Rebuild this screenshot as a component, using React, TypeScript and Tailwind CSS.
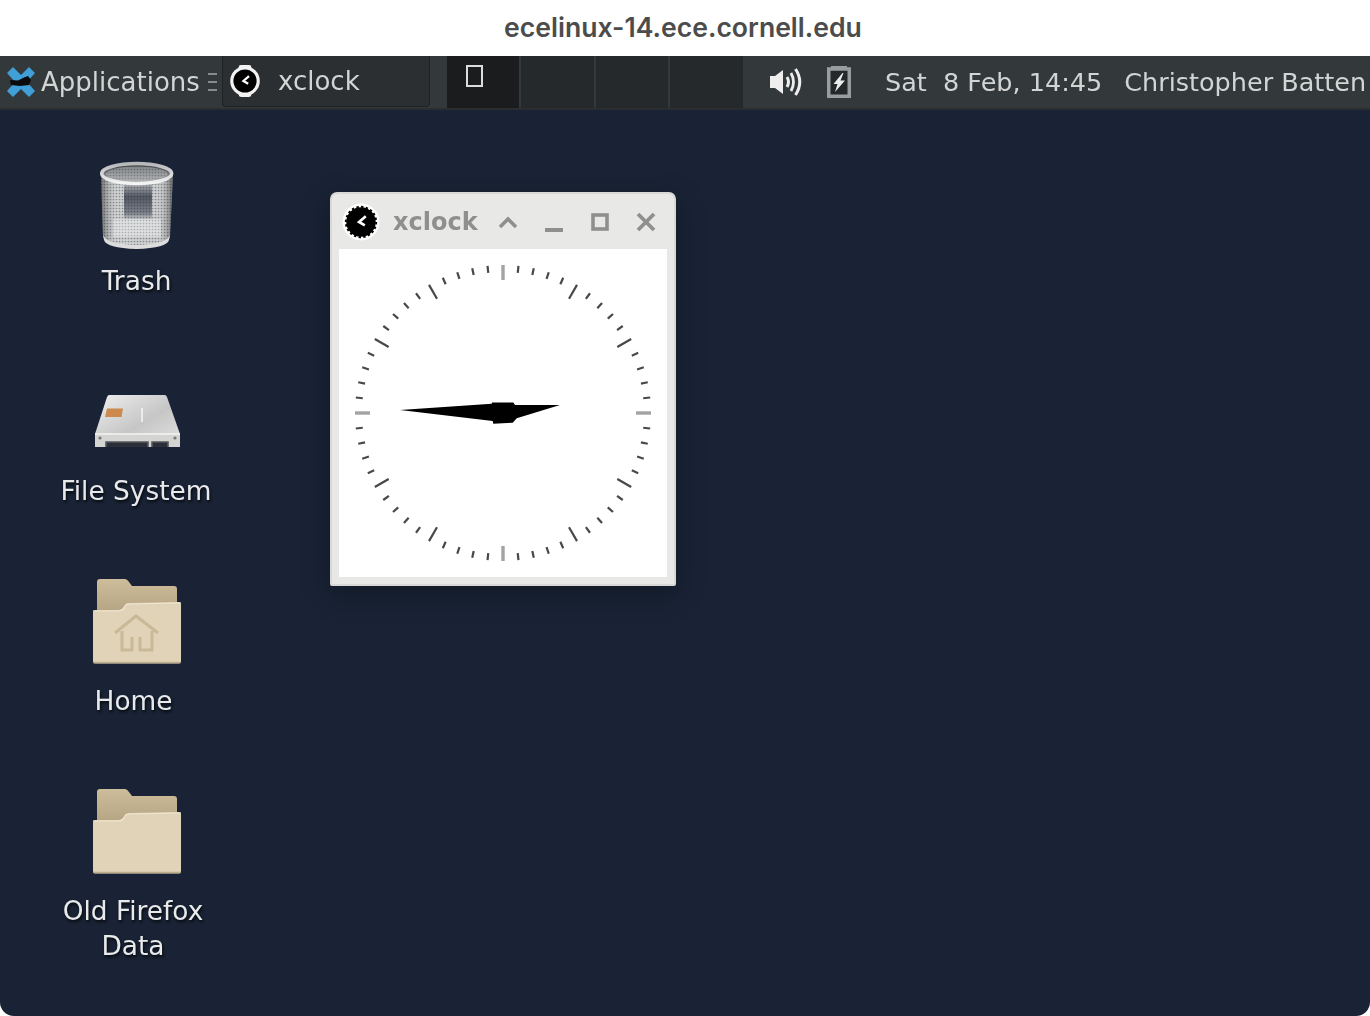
import React from "react";

const ticks = Array.from({ length: 60 }, (_, i) => i);

function ClockFace() {
  const c = 164;
  return (
    <svg width="328" height="328" viewBox="0 0 328 328" className="block blur-[0.5px]">
      {ticks.map((i) => {
        const a = (i * Math.PI) / 30;
        const major = i % 15 === 0;
        const mid = i % 5 === 0;
        const inner = major ? 133 : mid ? 132 : 141;
        const s = Math.sin(a);
        const k = Math.cos(a);
        return (
          <line
            key={i}
            x1={c + s * 148}
            y1={c - k * 148}
            x2={c + s * inner}
            y2={c - k * inner}
            stroke={major ? "#a3a3a3" : "#484848"}
            strokeWidth={major ? 3.4 : 2.2}
          />
        );
      })}
      <polygon
        points="61,161 152.7,154.7 153,153.5 174.3,153.5 176,156 221,156 177.7,169.3 173.7,173.7 154.3,174.7 153.7,172"
        fill="#000"
      />
    </svg>
  );
}

function MiniClock({ size, halo }: { size: number; halo: boolean }) {
  return (
    <svg width={size} height={size} viewBox="0 0 40 40" className="block blur-[0.4px]">
      {halo ? (
        <circle cx="20" cy="20" r="19.5" fill="#fff" />
      ) : (
        <>
          <rect x="12" y="0" width="16" height="40" rx="3" fill="#f2f2f2" />
          <circle cx="20" cy="20" r="18.5" fill="#f2f2f2" />
        </>
      )}
      <circle cx="20" cy="20" r={halo ? 15.5 : 14.5} fill="#000" />
      {halo ? (
        <circle cx="20" cy="20" r="16" fill="none" stroke="#000" strokeWidth="2" strokeDasharray="2.5 2.5" />
      ) : null}
      <path d="M25 14 L18 20 L24 23.5" fill="none" stroke="#fff" strokeWidth="2.8" />
    </svg>
  );
}

function AppMenuIcon() {
  return (
    <svg width="28" height="30" viewBox="0 0 28 30" className="block blur-[0.4px]">
      <path d="M0 6 L6 0 L14 8 L22 0 L28 6 L20 15 L28 24 L22 30 L14 22 L6 30 L0 24 L8 15 Z" fill="#3f9fd6" />
      <path d="M3 13 L11 13.5 L17 10.5 L21 9 L24 13 L22 18 L13 19 L4 18 Z" fill="#0b0b0b" />
    </svg>
  );
}

function SoundIcon() {
  return (
    <svg width="32" height="30" viewBox="0 0 32 30" fill="none" className="block blur-[0.4px]">
      <path d="M0 9 H5 L13 3 V27 L5 21 H0 Z" fill="#eeeeee" />
      <path d="M17 10 Q20 15 17 20" stroke="#eeeeee" strokeWidth="3" />
      <path d="M21 6 Q26 15 21 24" stroke="#eeeeee" strokeWidth="2.8" />
      <path d="M25.5 2 Q34 15 25.5 28" stroke="#eeeeee" strokeWidth="3" />
    </svg>
  );
}

function BatteryIcon() {
  return (
    <svg width="24" height="32" viewBox="0 0 24 32" fill="none" className="block blur-[0.4px]">
      <rect x="4" y="0" width="16" height="5" fill="#9a9d9d" />
      <rect x="1.75" y="3" width="20.5" height="27.25" fill="#24282a" stroke="#9a9d9d" strokeWidth="3.5" />
      <path d="M15.5 7 L6.5 18 H10.5 L8 26 L18 14.5 H13.5 L16.5 7 Z" fill="#ececec" />
    </svg>
  );
}

function TrashIcon() {
  return (
    <svg width="96" height="96" viewBox="0 0 96 96" className="block blur-[0.7px]">
      <defs>
        <pattern id="mesh" width="3" height="3" patternUnits="userSpaceOnUse">
          <rect width="3" height="3" fill="#c9cbcc" />
          <circle cx="1.5" cy="1.5" r="0.85" fill="#767a7d" />
        </pattern>
        <linearGradient id="shade" x1="0" y1="0" x2="1" y2="0">
          <stop offset="0" stopColor="#000" stopOpacity="0.45" />
          <stop offset="0.22" stopColor="#fff" stopOpacity="0.12" />
          <stop offset="0.78" stopColor="#fff" stopOpacity="0.08" />
          <stop offset="1" stopColor="#000" stopOpacity="0.5" />
        </linearGradient>
        <linearGradient id="rim" x1="0" y1="0" x2="0" y2="1">
          <stop offset="0" stopColor="#b5b7b9" />
          <stop offset="1" stopColor="#f4f4f4" />
        </linearGradient>
        <linearGradient id="well" x1="0" y1="0" x2="0" y2="1">
          <stop offset="0" stopColor="#2a3040" stopOpacity="0.2" />
          <stop offset="0.35" stopColor="#2a3040" stopOpacity="0.75" />
          <stop offset="0.8" stopColor="#2a3040" stopOpacity="0.5" />
          <stop offset="1" stopColor="#2a3040" stopOpacity="0" />
        </linearGradient>
        <linearGradient id="inner" x1="0" y1="0" x2="0" y2="1">
          <stop offset="0" stopColor="#3c3f44" />
          <stop offset="1" stopColor="#a8aaac" />
        </linearGradient>
      </defs>
      <path d="M13 18 L15 80 Q17 90 48.5 91 Q80 90 82 80 L85 18 Z" fill="url(#mesh)" />
      <path d="M13 18 L15 80 Q17 90 48.5 91 Q80 90 82 80 L85 18 Z" fill="url(#shade)" />
      <rect x="36" y="28" width="28" height="36" fill="url(#well)" />
      <rect x="25" y="63" width="48" height="18" fill="#fff" opacity="0.32" />
      <path d="M15 79 Q18 88 48.5 89 Q79 88 82 79 L81 84 Q79 92 48.5 93 Q18 92 16 84 Z" fill="#dcdcdc" />
      <ellipse cx="48.7" cy="17.5" rx="35" ry="10" fill="url(#inner)" />
      <ellipse cx="48.7" cy="18" rx="31" ry="7.5" fill="url(#mesh)" opacity="0.45" />
      <ellipse cx="48.7" cy="17.5" rx="35" ry="10" fill="none" stroke="url(#rim)" strokeWidth="3.6" />
    </svg>
  );
}

function DriveIcon() {
  return (
    <svg width="96" height="96" viewBox="0 0 96 96" className="block blur-[0.5px]">
      <defs>
        <linearGradient id="top" x1="0" y1="0" x2="1" y2="1">
          <stop offset="0" stopColor="#efefef" />
          <stop offset="0.55" stopColor="#c6c6c6" />
          <stop offset="1" stopColor="#e4e4e4" />
        </linearGradient>
      </defs>
      <path d="M21 29 H77 Q78 29 79 31 L92 68 V81 H7 V68 L19 31 Q20 29 21 29 Z" fill="url(#top)" />
      <path d="M7 68 H92 V81 H7 Z" fill="#d4d4d2" />
      <path d="M7 68 H92" stroke="#f5f5f5" strokeWidth="1.5" />
      <path d="M19 42.5 H35 L33.5 51 H17 Z" fill="#cc8a4c" />
      <path d="M54 42 V56" stroke="#f4f4f4" strokeWidth="1.6" />
      <circle cx="12" cy="72" r="1.6" fill="#777" />
      <circle cx="87" cy="72" r="1.6" fill="#777" />
      <path d="M18 81 V76 H60 V81 M64 81 V76 H80 V81" stroke="#55585a" strokeWidth="1.6" fill="#2a2f39" />
    </svg>
  );
}

function FolderIcon({ home }: { home: boolean }) {
  return (
    <svg width="96" height="96" viewBox="0 0 96 96" className="block blur-[0.4px]">
      <defs>
        <linearGradient id="back" x1="0" y1="0" x2="0" y2="1">
          <stop offset="0" stopColor="#cdbd9b" />
          <stop offset="1" stopColor="#b3a27f" />
        </linearGradient>
      </defs>
      <path d="M9 6 Q9 3 12 3 L37 3 Q39 3 41 6 L44 10 L86 10 Q89 10 89 13 L89 40 L9 40 Z" fill="url(#back)" />
      <path
        d="M5 36 Q5 34 7 34 L30 34 Q35 34 37 29 Q38 27 41 27 L91 26 Q93 26 93 28 L93 85 Q93 87.5 91 87.5 L7 87.5 Q5 87.5 5 85 Z"
        fill="#e1d3b7"
      />
      <path d="M5 35 L30 35 Q35 35 37 30 Q38 28 41 28 L93 27" fill="none" stroke="#efe6d3" strokeWidth="1.2" />
      <path d="M5.5 86.5 H92.5" stroke="#bfae8c" strokeWidth="1.4" />
      {home ? (
        <path
          d="M27 57 L48 40 L70 57 M34 55 V74 H44 V61 M52 61 V74 H64 V55"
          fill="none"
          stroke="#c9b998"
          strokeWidth="3"
        />
      ) : null}
    </svg>
  );
}

function DesktopItem({ icon, label, shift }: { icon: React.ReactNode; label: React.ReactNode; shift: string }) {
  return (
    <div className="flex h-[210px] w-[272px] flex-col items-center">
      {icon}
      <div
        className={`mt-[11px] text-center text-[26.4px] leading-[35px] text-[#e8eaec] [text-shadow:1px_2px_3px_rgba(0,0,0,0.8)] blur-[0.5px] ${shift}`}
      >
        {label}
      </div>
    </div>
  );
}

export default function App() {
  return (
    <div className="h-[1016px] w-[1370px] overflow-hidden bg-white font-['DejaVu_Sans',sans-serif]">
      <div className="flex h-[56px] items-center justify-center">
        <span className="mr-[4px] font-['Inter',sans-serif] text-[26.6px] font-semibold text-[#4c4c4c]">
          ecelinux-14.ece.cornell.edu
        </span>
      </div>

      <div className="flex h-[960px] flex-col overflow-hidden rounded-b-[14px] bg-[#192335]">
        <div className="flex h-[54px] shrink-0 border-b-2 border-[#2a2e31] bg-[#33383b] text-[26px] text-[#d3d5d4]">
          <div className="flex w-[222px] shrink-0 items-center pl-[7px]">
            <AppMenuIcon />
            <span className="ml-[6px] blur-[0.5px]">Applications</span>
            <div className="ml-[8px] flex flex-col gap-[6px]">
              <div className="h-[2px] w-[9px] bg-[#888b8c]" />
              <div className="h-[2px] w-[9px] bg-[#888b8c]" />
              <div className="h-[2px] w-[9px] bg-[#888b8c]" />
            </div>
          </div>

          <div className="flex h-[51px] w-[208px] shrink-0 items-center rounded-b-[4px] border border-t-0 border-[#1f2224] bg-[#2b2f32] pl-[6px]">
            <MiniClock size={32} halo={false} />
            <span className="ml-[17px] blur-[0.5px]">xclock</span>
          </div>

          <div className="ml-[17px] flex h-[52px] w-[296px] shrink-0 gap-[2px]">
            <div className="w-[72px] bg-[#1b1c1d] pl-[19px] pt-[9px]">
              <div className="h-[22px] w-[17px] border-2 border-[#dcdcdc]" />
            </div>
            <div className="flex-1 bg-[#26292b]" />
            <div className="flex-1 bg-[#26292b]" />
            <div className="flex-1 bg-[#26292b]" />
          </div>

          <div className="ml-[27px] flex items-center text-[25.5px]">
            <SoundIcon />
            <div className="ml-[25px]">
              <BatteryIcon />
            </div>
            <span className="ml-[34px] whitespace-pre blur-[0.5px]">Sat  8 Feb, 14:45</span>
            <span className="ml-[22px] whitespace-nowrap blur-[0.5px]">Christopher Batten</span>
          </div>
        </div>

        <div className="relative flex-1">
          <div className="flex flex-col pt-[46px]">
            <DesktopItem icon={<TrashIcon />} label="Trash" shift="pl-[1px]" />
            <DesktopItem icon={<DriveIcon />} label="File System" shift="" />
            <DesktopItem icon={<FolderIcon home={true} />} label="Home" shift="pr-[5px]" />
            <DesktopItem
              icon={<FolderIcon home={false} />}
              label={
                <>
                  Old Firefox
                  <br />
                  Data
                </>
              }
              shift="pr-[6px]"
            />
          </div>

          <div className="absolute left-[330px] top-[82px] h-[394px] w-[346px] rounded-t-[7px] rounded-b-[2px] border-2 border-[#d8d8d6] bg-[#e8e8e7] shadow-[0_8px_30px_rgba(0,0,0,0.3)]">
            <div className="flex h-[55px] items-center pl-[10px] pt-[1px]">
              <MiniClock size={38} halo={true} />
              <span className="ml-[13px] w-[92px] text-[24px] font-bold text-[#8f8f8f] blur-[0.4px]">xclock</span>
              <div className="flex items-center text-[#8f8f8f]">
                <svg width="46" height="24" viewBox="0 0 46 24" fill="none" className="block">
                  <path d="M15 17 L23 9 L31 17" stroke="currentColor" strokeWidth="3.6" />
                </svg>
                <svg width="46" height="24" viewBox="0 0 46 24" fill="none" className="block">
                  <path d="M14 20 H32" stroke="currentColor" strokeWidth="4" />
                </svg>
                <svg width="46" height="24" viewBox="0 0 46 24" fill="none" className="block">
                  <rect x="16" y="5" width="14" height="14" stroke="currentColor" strokeWidth="3.6" />
                </svg>
                <svg width="46" height="24" viewBox="0 0 46 24" fill="none" className="block">
                  <path d="M15 4 L31 20 M31 4 L15 20" stroke="currentColor" strokeWidth="3.8" />
                </svg>
              </div>
            </div>
            <div className="ml-[7px] h-[328px] w-[328px] bg-white">
              <ClockFace />
            </div>
          </div>
        </div>
      </div>
    </div>
  );
}
